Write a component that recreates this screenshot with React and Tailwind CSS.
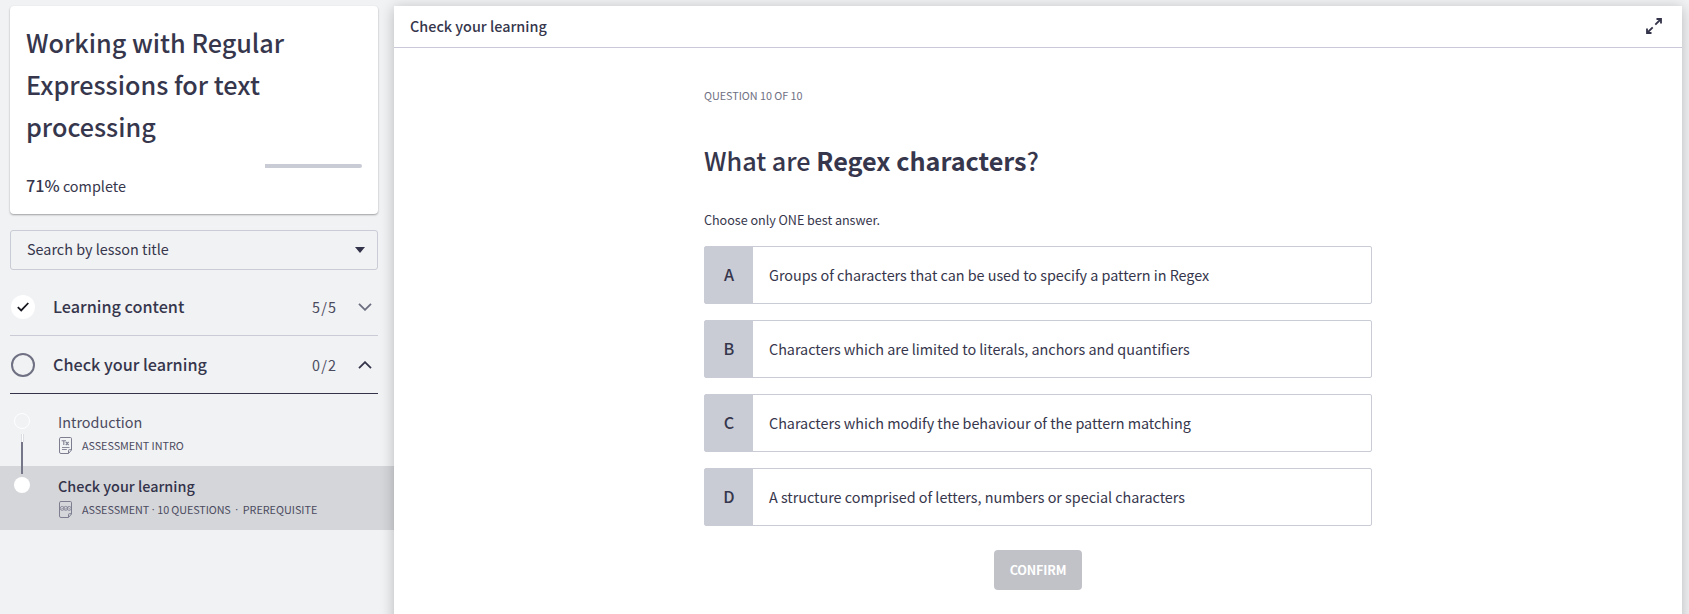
import React from "react";

const options = [
  ["A", "Groups of characters that can be used to specify a pattern in Regex"],
  ["B", "Characters which are limited to literals, anchors and quantifiers"],
  ["C", "Characters which modify the behaviour of the pattern matching"],
  ["D", "A structure comprised of letters, numbers or special characters"],
];

function Chevron({ up }) {
  return (
    <svg width="14" height="8" viewBox="0 0 14 8" fill="none" stroke={up ? "#33334a" : "#6c6e80"} strokeWidth="1.8">
      <path d={up ? "M1 7.2L7 1.2L13 7.2" : "M1 0.8L7 6.8L13 0.8"} />
    </svg>
  );
}

function DocIcon({ quiz }) {
  return (
    <svg className="ml-px" width="14" height="17" viewBox="0 0 14 17" fill="none" stroke="#7d7e90" strokeWidth="1">
      <path d="M2 0.5H11.5Q12.5 0.5 12.5 1.8V13L9.5 16.5H2Q0.5 16.5 0.5 15V1.7Q0.5 0.5 2 0.5Z" />
      <path d="M12.5 12.7H10.3Q9.5 12.7 9.5 13.5V16.3" />
      {quiz ? (
        <>
          <circle cx="3.2" cy="7.4" r="2" strokeWidth="0.8" />
          <circle cx="6.7" cy="7.4" r="2" strokeWidth="0.8" />
          <circle cx="10.2" cy="7.4" r="2" strokeWidth="0.8" />
          <path d="M2.3 7.6L3 8.2L4.2 6.8M5.9 7.6L6.6 8.2L7.7 6.8M9.4 6.6L11 8.2" strokeWidth="0.7" />
        </>
      ) : (
        <>
          <path d="M2.6 3.7H7M4.8 3.7V8M6.8 5L9.6 8M9.6 5L6.8 8" strokeWidth="1.1" />
          <path d="M3 10.5H10.5M3 12.5H7.8" strokeWidth="0.9" />
        </>
      )}
    </svg>
  );
}

function Section({ title, count, open }) {
  return (
    <div className={open ? "flex h-[58px] items-center border-b border-[#33334a]" : "flex h-[58px] items-center border-b border-[#c9cbd5]"}>
      <span className="ml-px flex size-6 items-center justify-center">
        {open ? (
          <span className="size-6 rounded-full border-2 border-[#6f7183]" />
        ) : (
          <span className="flex size-6 items-center justify-center rounded-full bg-white">
            <svg width="12" height="10" viewBox="0 0 12 10" fill="none" stroke="#16161f" strokeWidth="1.8">
              <path d="M0.8 5.2L4.2 8.4L11.3 1" />
            </svg>
          </span>
        )}
      </span>
      <span className="ml-[18px] flex-1 text-[16.2px] font-medium">{title}</span>
      <span className="mr-[21px] text-[14.4px] tracking-[1.1px] text-[#4b4b60]">{count}</span>
      <span className="mr-[6px]"><Chevron up={open} /></span>
    </div>
  );
}

export default function App() {
  return (
    <div className="flex h-[614px] w-[1689px] overflow-hidden bg-[#f1f2f4] font-['Noto_Sans_CJK_SC',sans-serif] text-[#36364c]">
      <aside className="flex w-[394px] shrink-0 flex-col pt-[6px]">
        <section className="mx-[10px] h-[208px] w-[368px] shrink-0 rounded bg-white px-4 pt-[15px] shadow-[0_1px_2px_rgba(0,0,0,0.35)]">
          <h1 className="text-[25.2px] leading-[42px] font-medium">
            Working with Regular<br />Expressions for text<br />processing
          </h1>
          <div className="mt-[17px] flex h-1 justify-end">
            <div className="w-[97px] rounded-r-sm bg-[#c9cbd5]" />
          </div>
          <p className="mt-[5px] text-[14.4px] leading-6"><span className="text-[16.2px] font-medium">71%</span> complete</p>
        </section>
        <div className="mx-[10px] mt-4 flex h-10 w-[368px] shrink-0 items-center justify-between rounded-[3px] border border-[#c9cbd5] pr-3 pl-4 text-[14.4px]">
          <span className="pb-0.5">Search by lesson title</span>
          <svg width="10" height="6" viewBox="0 0 10 6" fill="#33334a"><path d="M0 0H10L5 6Z" /></svg>
        </div>
        <div className="mx-[10px] mt-2 w-[368px]">
          <Section title="Learning content" count="5/5" />
          <Section title="Check your learning" count="0/2" open />
        </div>
        <div className="mt-2 flex h-16 shrink-0">
          <div className="flex w-[58px] flex-col items-start pt-[11px] pl-[14px]">
            <span className="size-4 rounded-full border border-white" />
            <span className="mt-[5px] ml-[7px] h-2 w-[3px] border-x border-[#dcdde2] bg-white" />
            <span className="ml-[7px] h-6 w-[2px] bg-[#757687]" />
          </div>
          <div className="pt-2 text-[#4b4b60]">
            <div className="text-[14.4px] leading-6">Introduction</div>
            <div className="flex h-[22px] items-center gap-[9px] text-[10.8px]"><DocIcon /><span className="tracking-[-0.05px]">ASSESSMENT INTRO</span></div>
          </div>
        </div>
        <div className="flex h-16 shrink-0 bg-[#d5d6da]">
          <div className="flex w-[58px] flex-col items-start pl-[14px]">
            <span className="ml-[7px] h-2 w-[2px] bg-[#757687]" />
            <span className="mt-[3px] size-4 rounded-full bg-white" />
          </div>
          <div className="pt-2 text-[#4b4b60]">
            <div className="text-[14.4px] leading-6 font-medium text-[#33334a]">Check your learning</div>
            <div className="flex h-[22px] items-center text-[10.8px]">
              <DocIcon quiz />
              <span className="ml-[9px] tracking-[-0.05px]">ASSESSMENT</span>
              <span className="w-[8px] text-center font-['Open_Sans',sans-serif]">·</span>
              <span className="tracking-[-0.1px]">10 QUESTIONS</span>
              <span className="w-[12px] text-center font-['Open_Sans',sans-serif]">·</span>
              <span>PREREQUISITE</span>
            </div>
          </div>
        </div>
      </aside>
      <main className="mt-[6px] flex h-[640px] w-[1288px] shrink-0 flex-col items-center bg-white shadow-[0_2px_13px_rgba(0,0,0,0.24)]">
        <header className="flex h-[42px] w-full items-center justify-between border-b border-[#c9c9d9] pr-5 pl-4">
          <span className="pb-0.5 text-[14.4px] font-medium">Check your learning</span>
          <svg className="-mt-0.5" width="16" height="16" viewBox="0 0 16 16" fill="none" stroke="#33334a" strokeWidth="1.8">
            <path d="M10.5 1H15V5.5M15 1L9.3 6.7M1 10.5V15H5.5M1 15L6.7 9.3" />
          </svg>
        </header>
        <div className="flex w-[668px] flex-col">
          <p className="mt-[37px] text-[10.8px] leading-5 tracking-[-0.03px] text-[#6f7183]">QUESTION 10 OF 10</p>
          <h2 className="mt-[34px] text-[25.2px] leading-[42px] font-medium">What are <b>Regex characters</b>?</h2>
          <p className="mt-[29px] text-[12.6px] leading-5 tracking-[-0.03px]">Choose only ONE best answer.</p>
          <div className="mt-4 flex flex-col gap-4">
            {options.map(([k, t]) => (
              <div key={k} className="flex h-[58px] items-center rounded-[2px] border border-[#c9cbd5]">
                <span className="flex h-full w-12 items-center justify-center bg-[#c9cbd5] pb-px text-[16.2px] font-medium">{k}</span>
                <span className="ml-4 text-[14.4px] tracking-[-0.03px]">{t}</span>
              </div>
            ))}
          </div>
          <button className="mt-6 h-10 w-[88px] self-center rounded bg-[#c1c2c8] text-[12.6px] font-bold tracking-[-0.15px] text-white">CONFIRM</button>
        </div>
      </main>
    </div>
  );
}
